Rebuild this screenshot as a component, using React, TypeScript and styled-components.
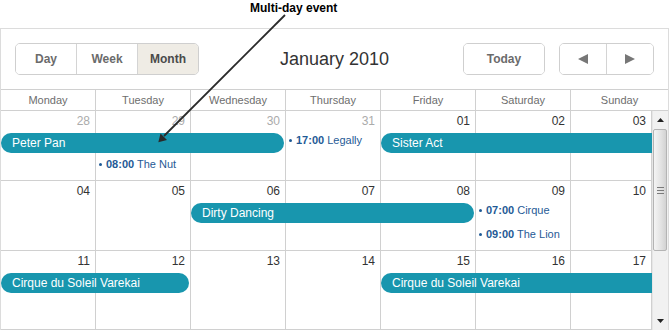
import styled, { createGlobalStyle } from 'styled-components';

const GlobalStyle = createGlobalStyle`
  html, body {
    margin: 0;
    padding: 0;
    background: #fff;
  }
  body {
    font-family: 'Liberation Sans', Arial, sans-serif;
    overflow: hidden;
  }
`;

const Page = styled.div`
  position: relative;
  width: 669px;
  height: 330px;
  overflow: hidden;
`;

const Caption = styled.div`
  height: 28px;
  padding-left: 250px;
  font-size: 12px;
  font-weight: bold;
  line-height: 17px;
  color: #000;
  box-sizing: border-box;
`;

const Pointer = styled.svg`
  position: absolute;
  left: 0;
  top: 0;
  pointer-events: none;
  z-index: 5;
`;

const Calendar = styled.div`
  width: 669px;
  box-sizing: border-box;
  border: 1px solid #dcdcdc;
  border-bottom: none;
`;

const Toolbar = styled.div`
  display: grid;
  grid-template-columns: 1fr auto 1fr;
  align-items: center;
  height: 61px;
  box-sizing: border-box;
  padding: 14px;
  border-bottom: 1px solid #d0d0d0;
`;

const ButtonGroup = styled.div<{ $end?: boolean }>`
  display: flex;
  justify-self: ${({ $end }) => ($end ? 'end' : 'start')};
  gap: 14px;
`;

const Segmented = styled.div`
  display: flex;
  border: 1px solid #cfcfcf;
  border-radius: 5px;
  overflow: hidden;
  height: 32px;
  box-sizing: border-box;
`;

const Segment = styled.div<{ $active?: boolean; $w: number }>`
  width: ${({ $w }) => $w}px;
  box-sizing: border-box;
  display: flex;
  align-items: center;
  justify-content: center;
  font-size: 12px;
  font-weight: bold;
  color: ${({ $active }) => ($active ? '#4a4a4a' : '#6b6b6b')};
  background: ${({ $active }) => ($active ? '#efece5' : '#fff')};
  & + & {
    border-left: 1px solid #d4d4d4;
  }
`;

const Title = styled.div`
  font-size: 18px;
  color: #333;
  white-space: nowrap;
`;

const HeaderRow = styled.div`
  display: grid;
  grid-template-columns: repeat(6, 95px) 1fr;
  border-bottom: 1px solid #d0d0d0;
`;

const DayName = styled.div`
  height: 20px;
  line-height: 20px;
  text-align: center;
  font-size: 11px;
  color: #6e6e6e;
  border-right: 1px solid #d0d0d0;
  &:last-child {
    border-right: none;
  }
`;

const Body = styled.div`
  display: flex;
  height: 219px;
  overflow: hidden;
`;

const Weeks = styled.div`
  width: 651px;
  flex: none;
`;

const Week = styled.div<{ $h: number }>`
  display: grid;
  grid-template-columns: repeat(6, 95px) 1fr;
  grid-template-rows: 22px 24px 20px 1fr;
  height: ${({ $h }) => $h}px;
  box-sizing: border-box;
  border-bottom: 1px solid #d0d0d0;
`;

const Cell = styled.div<{ $col: number }>`
  grid-column: ${({ $col }) => $col};
  grid-row: 1 / -1;
  border-right: 1px solid #d0d0d0;
`;

const DateNum = styled.div<{ $other?: boolean }>`
  text-align: right;
  padding: 3px 5px 0 0;
  font-size: 12px;
  line-height: 15px;
  color: ${({ $other }) => ($other ? '#ababab' : '#333')};
`;

const Bar = styled.div<{ $col: number; $span: number; $slot: number; $cont?: boolean }>`
  grid-column: ${({ $col, $span }) => `${$col} / span ${$span}`};
  grid-row: ${({ $slot }) => $slot + 1};
  align-self: start;
  height: 20px;
  line-height: 20px;
  margin-right: ${({ $cont }) => ($cont ? 0 : 2)}px;
  padding-left: 11px;
  border-radius: ${({ $cont }) => ($cont ? '10px 0 0 10px' : '10px')};
  background: #1896ae;
  color: #fff;
  font-size: 12px;
  white-space: nowrap;
  overflow: hidden;
  z-index: 1;
`;

const Item = styled.div<{ $col: number; $slot: number }>`
  grid-column: ${({ $col }) => $col};
  grid-row: ${({ $slot }) => $slot + 1};
  align-self: start;
  display: flex;
  align-items: center;
  gap: 4px;
  padding-left: 3px;
  line-height: 15px;
  font-size: 11px;
  color: #1f5a96;
  white-space: nowrap;
  overflow: hidden;
  z-index: 1;

  &::before {
    content: '';
    width: 3px;
    height: 3px;
    border-radius: 50%;
    background: #1f5a96;
    flex: none;
  }

  b {
    font-weight: bold;
  }
`;

const Scrollbar = styled.div`
  width: 16px;
  flex: none;
  display: flex;
  flex-direction: column;
  background: #f1f1f1;
  border-left: 1px solid #e6e6e6;
  box-sizing: border-box;
`;

const ScrollBtn = styled.div`
  height: 18px;
  display: flex;
  align-items: center;
  justify-content: center;
  flex: none;
`;

const Thumb = styled.div`
  height: 122px;
  margin: 0 1px 0 0;
  box-sizing: border-box;
  border: 1px solid #b4b4b4;
  border-radius: 2px;
  background: linear-gradient(to right, #f4f4f4, #e2e2e2 60%, #d2d2d2);
  display: flex;
  flex-direction: column;
  align-items: center;
  justify-content: center;
  gap: 2px;

  span {
    width: 7px;
    height: 1px;
    background: #7a7a7a;
  }
`;

const Track = styled.div`
  flex: 1;
`;

type WeekEvent =
  | { kind: 'bar'; col: number; span: number; slot: number; title: string; cont?: boolean }
  | { kind: 'item'; col: number; slot: number; time: string; title: string };

interface WeekData {
  height: number;
  days: { n: string; other?: boolean }[];
  events: WeekEvent[];
}

const dayNames = ['Monday', 'Tuesday', 'Wednesday', 'Thursday', 'Friday', 'Saturday', 'Sunday'];

const weeks: WeekData[] = [
  {
    height: 70,
    days: [
      { n: '28', other: true },
      { n: '29', other: true },
      { n: '30', other: true },
      { n: '31', other: true },
      { n: '01' },
      { n: '02' },
      { n: '03' },
    ],
    events: [
      { kind: 'bar', col: 1, span: 3, slot: 1, title: 'Peter Pan' },
      { kind: 'item', col: 4, slot: 1, time: '17:00', title: 'Legally' },
      { kind: 'bar', col: 5, span: 3, slot: 1, title: 'Sister Act', cont: true },
      { kind: 'item', col: 2, slot: 2, time: '08:00', title: 'The Nut' },
    ],
  },
  {
    height: 70,
    days: ['04', '05', '06', '07', '08', '09', '10'].map((n) => ({ n })),
    events: [
      { kind: 'bar', col: 3, span: 3, slot: 1, title: 'Dirty Dancing' },
      { kind: 'item', col: 6, slot: 1, time: '07:00', title: 'Cirque' },
      { kind: 'item', col: 6, slot: 2, time: '09:00', title: 'The Lion' },
    ],
  },
  {
    height: 79,
    days: ['11', '12', '13', '14', '15', '16', '17'].map((n) => ({ n })),
    events: [
      { kind: 'bar', col: 1, span: 2, slot: 1, title: 'Cirque du Soleil Varekai' },
      { kind: 'bar', col: 5, span: 3, slot: 1, title: 'Cirque du Soleil Varekai', cont: true },
    ],
  },
];

function Triangle({ dir }: { dir: 'left' | 'right' | 'up' | 'down' }) {
  const pts = {
    left: '0,5 10,0 10,10',
    right: '0,0 10,5 0,10',
    up: '0,4 3.5,0 7,4',
    down: '0,0 7,0 3.5,4',
  }[dir];
  const small = dir === 'up' || dir === 'down';
  return (
    <svg width={small ? 7 : 10} height={small ? 4 : 10} viewBox={small ? '0 0 7 4' : '0 0 10 10'}>
      <polygon points={pts} fill={small ? '#222' : '#777'} />
    </svg>
  );
}

export default function App() {
  return (
    <Page>
      <GlobalStyle />
      <Caption>Multi-day event</Caption>
      <Calendar>
        <Toolbar>
          <ButtonGroup>
            <Segmented>
              <Segment $w={60}>Day</Segment>
              <Segment $w={61}>Week</Segment>
              <Segment $w={61} $active>
                Month
              </Segment>
            </Segmented>
          </ButtonGroup>
          <Title>January 2010</Title>
          <ButtonGroup $end>
            <Segmented>
              <Segment $w={80}>Today</Segment>
            </Segmented>
            <Segmented>
              <Segment $w={46}>
                <Triangle dir="left" />
              </Segment>
              <Segment $w={47}>
                <Triangle dir="right" />
              </Segment>
            </Segmented>
          </ButtonGroup>
        </Toolbar>
        <HeaderRow>
          {dayNames.map((d) => (
            <DayName key={d}>{d}</DayName>
          ))}
        </HeaderRow>
        <Body>
          <Weeks>
            {weeks.map((w, wi) => (
              <Week key={wi} $h={w.height}>
                {w.days.map((d, i) => (
                  <Cell key={i} $col={i + 1}>
                    <DateNum $other={d.other}>{d.n}</DateNum>
                  </Cell>
                ))}
                {w.events.map((e, ei) =>
                  e.kind === 'bar' ? (
                    <Bar key={ei} $col={e.col} $span={e.span} $slot={e.slot} $cont={e.cont}>
                      {e.title}
                    </Bar>
                  ) : (
                    <Item key={ei} $col={e.col} $slot={e.slot}>
                      <span>
                        <b>{e.time}</b> {e.title}
                      </span>
                    </Item>
                  )
                )}
              </Week>
            ))}
          </Weeks>
          <Scrollbar>
            <ScrollBtn>
              <Triangle dir="up" />
            </ScrollBtn>
            <Thumb>
              <span />
              <span />
              <span />
            </Thumb>
            <Track />
            <ScrollBtn>
              <Triangle dir="down" />
            </ScrollBtn>
          </Scrollbar>
        </Body>
      </Calendar>
      <Pointer width={669} height={330} viewBox="0 0 669 330">
        <line x1={285} y1={15} x2={164} y2={136} stroke="#2a2a2a" strokeWidth={1.8} />
        <polygon points="158.3,142.3 160.5,133.5 167,140" fill="#2a2a2a" />
      </Pointer>
    </Page>
  );
}
